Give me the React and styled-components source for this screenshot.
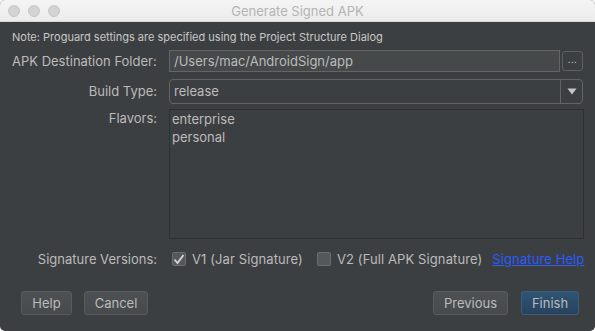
import React from "react";
import styled, { createGlobalStyle } from "styled-components";

const Global = createGlobalStyle`
  html, body {
    margin: 0;
    padding: 0;
    background: #ffffff;
  }
  * {
    box-sizing: border-box;
  }
`;

const Window = styled.div`
  width: 595px;
  height: 331px;
  display: flex;
  flex-direction: column;
  border-radius: 5px;
  overflow: hidden;
  font-family: Inter, "Noto Sans", "Liberation Sans", sans-serif;
  background: #3c3f41;
`;

const TitleBar = styled.div`
  height: 22px;
  flex: none;
  position: relative;
  display: flex;
  align-items: center;
  justify-content: center;
  background: linear-gradient(#f4f4f4, #ececec);
  border-bottom: 1px solid #d8d8d8;
  color: #b4b4b4;
  font-size: 13px;
`;

const Lights = styled.div`
  position: absolute;
  left: 8px;
  top: 5px;
  display: flex;
  gap: 8px;
`;

const Light = styled.span`
  width: 12px;
  height: 12px;
  border-radius: 50%;
  background: #d3d3d3;
  border: 1px solid #c6c6c6;
`;

const Body = styled.div`
  flex: 1;
  display: flex;
  flex-direction: column;
  padding: 8px 12px 0 12px;
  color: #bbbbbb;
`;

const Note = styled.div`
  font-size: 11px;
  line-height: 14px;
  color: #c8c8c8;
`;

const Form = styled.div`
  display: grid;
  grid-template-columns: 145px minmax(0, 1fr);
  column-gap: 12px;
  margin-top: 6px;
`;

const Label = styled.div`
  font-size: 13px;
  color: #bbbbbb;
  text-align: ${(p) => (p.$left ? "left" : "right")};
  line-height: ${(p) => p.$lh || "22px"};
  white-space: nowrap;
  margin-top: ${(p) => p.$mt || "0"};
`;

const FieldRow = styled.div`
  display: flex;
  align-items: center;
  gap: 2px;
  height: 22px;
`;

const TextField = styled.div`
  flex: 1;
  height: 22px;
  background: #45494a;
  border: 1px solid #646464;
  padding: 0 4px;
  font-size: 13px;
  line-height: 20px;
  color: #bbbbbb;
`;

const Browse = styled.div`
  width: 21px;
  height: 20px;
  border: 1px solid #5e6060;
  border-radius: 3px;
  display: flex;
  align-items: center;
  justify-content: center;
  color: #bbbbbb;
  font-size: 9px;
  letter-spacing: 0.5px;
  padding-bottom: 3px;
`;

const Combo = styled.div`
  margin-top: 7px;
  height: 25px;
  border: 1px solid #646464;
  border-radius: 4px;
  display: flex;
  align-items: stretch;
`;

const ComboValue = styled.div`
  flex: 1;
  padding: 0 4px;
  font-size: 13px;
  line-height: 23px;
  color: #bbbbbb;
`;

const ComboArrow = styled.div`
  width: 22px;
  border-left: 1px solid #646464;
  display: flex;
  align-items: center;
  justify-content: center;
`;

const ListBox = styled.div`
  margin-top: 5px;
  height: 130px;
  margin-right: -1px;
  border: 1px solid #2e3032;
  padding: 0 2px;
  font-size: 13px;
  line-height: 18px;
  color: #bbbbbb;
`;

const SigRow = styled.div`
  margin-top: 10px;
  height: 20px;
  display: flex;
  align-items: center;
  padding-left: 3px;
  font-size: 13px;
  letter-spacing: 0.1px;
  white-space: nowrap;
`;

const Check = styled.span`
  width: 14px;
  height: 14px;
  border-radius: 2px;
  background: #55585a;
  border: 1px solid #6b6d6f;
  display: inline-flex;
  align-items: center;
  justify-content: center;
  margin-right: 6px;
  flex: none;
`;

const CheckText = styled.span`
  color: #bbbbbb;
  margin-right: ${(p) => p.$gap || "14px"};
  flex: none;
`;

const HelpLink = styled.a`
  color: #2a5bff;
  text-decoration: underline;
  flex: none;
`;

const ButtonBar = styled.div`
  margin-top: 22px;
  display: flex;
  align-items: center;
  padding: 0 4px 0 9px;
`;

const Spacer = styled.div`
  flex: 1;
`;

const Button = styled.div`
  height: 24px;
  width: ${(p) => p.$w};
  margin-left: ${(p) => p.$ml || "0"};
  border-radius: 3px;
  border: 1px solid ${(p) => (p.$primary ? "#3f5d7a" : "#595c5e")};
  background: ${(p) =>
    p.$primary
      ? "linear-gradient(#2f5474, #26435e)"
      : "linear-gradient(#4d5153, #464a4c)"};
  color: #bbbbbb;
  font-size: 13px;
  line-height: 22px;
  text-align: center;
`;

export default function App() {
  return (
    <>
      <Global />
      <Window>
        <TitleBar>
          <Lights>
            <Light />
            <Light />
            <Light />
          </Lights>
          Generate Signed APK
        </TitleBar>
        <Body>
          <Note>
            Note: Proguard settings are specified using the Project Structure
            Dialog
          </Note>
          <Form>
            <Label $left>APK Destination Folder:</Label>
            <FieldRow>
              <TextField>/Users/mac/AndroidSign/app</TextField>
              <Browse>...</Browse>
            </FieldRow>

            <Label $mt="7px" $lh="25px">Build Type:</Label>
            <Combo>
              <ComboValue>release</ComboValue>
              <ComboArrow>
                <svg width="10" height="7" viewBox="0 0 10 7">
                  <path d="M0.5 0.5 L9.5 0.5 L5 6.5 Z" fill="#c4c4c4" />
                </svg>
              </ComboArrow>
            </Combo>

            <Label $mt="5px" $lh="18px">Flavors:</Label>
            <ListBox>
              <div>enterprise</div>
              <div>personal</div>
            </ListBox>

            <Label $mt="10px" $lh="20px">Signature Versions:</Label>
            <SigRow>
              <Check>
                <svg width="12" height="11" viewBox="0 0 12 11">
                  <path
                    d="M1.5 5.5 L4.5 9 L10.5 1"
                    fill="none"
                    stroke="#d6d6d6"
                    strokeWidth="1.8"
                  />
                </svg>
              </Check>
              <CheckText>V1 (Jar Signature)</CheckText>
              <Check />
              <CheckText $gap="10px">V2 (Full APK Signature)</CheckText>
              <HelpLink href="#">Signature Help</HelpLink>
            </SigRow>
          </Form>
          <ButtonBar>
            <Button $w="51px">Help</Button>
            <Button $w="64px" $ml="12px">Cancel</Button>
            <Spacer />
            <Button $w="75px">Previous</Button>
            <Button $w="58px" $ml="13px" $primary>
              Finish
            </Button>
          </ButtonBar>
        </Body>
      </Window>
    </>
  );
}
